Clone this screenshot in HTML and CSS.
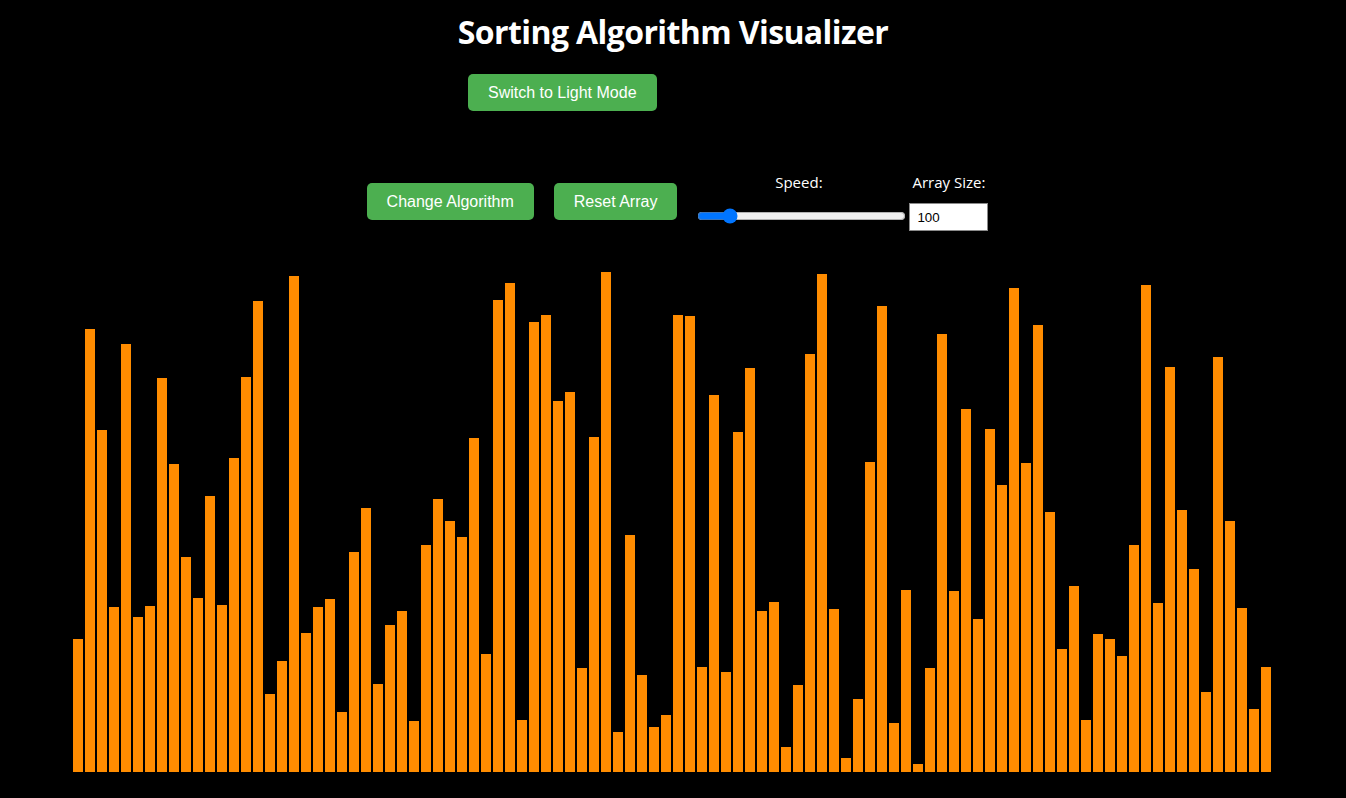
FILE: index.html
```html
<!DOCTYPE html>
<html lang="en">
<head>
<meta charset="utf-8">
<title>Sorting Algorithm Visualizer</title>
<link rel="stylesheet" href="styles.css">
</head>
<body>
<h1 class="title">Sorting Algorithm Visualizer</h1>
<div class="mode-row">
  <button class="btn">Switch to Light Mode</button>
</div>
<div class="controls">
  <button class="btn">Change Algorithm</button>
  <button class="btn">Reset Array</button>
  <div class="inputs">
    <div class="group group-speed">
      <label class="label" for="speed">Speed:</label>
      <div class="slider-wrap"><input id="speed" class="slider" type="range" min="0" max="100" value="13"></div>
    </div>
    <div class="group group-size">
      <label class="label" for="size">Array Size:</label>
      <input id="size" class="size-input" type="number" value="100">
    </div>
  </div>
</div>
<div class="bars">
<div class="bar" style="height:133px"></div>
<div class="bar" style="height:443px"></div>
<div class="bar" style="height:342px"></div>
<div class="bar" style="height:165px"></div>
<div class="bar" style="height:428px"></div>
<div class="bar" style="height:155px"></div>
<div class="bar" style="height:166px"></div>
<div class="bar" style="height:394px"></div>
<div class="bar" style="height:308px"></div>
<div class="bar" style="height:215px"></div>
<div class="bar" style="height:174px"></div>
<div class="bar" style="height:276px"></div>
<div class="bar" style="height:167px"></div>
<div class="bar" style="height:314px"></div>
<div class="bar" style="height:395px"></div>
<div class="bar" style="height:471px"></div>
<div class="bar" style="height:78px"></div>
<div class="bar" style="height:111px"></div>
<div class="bar" style="height:496px"></div>
<div class="bar" style="height:139px"></div>
<div class="bar" style="height:165px"></div>
<div class="bar" style="height:173px"></div>
<div class="bar" style="height:60px"></div>
<div class="bar" style="height:220px"></div>
<div class="bar" style="height:264px"></div>
<div class="bar" style="height:88px"></div>
<div class="bar" style="height:147px"></div>
<div class="bar" style="height:161px"></div>
<div class="bar" style="height:51px"></div>
<div class="bar" style="height:227px"></div>
<div class="bar" style="height:273px"></div>
<div class="bar" style="height:251px"></div>
<div class="bar" style="height:235px"></div>
<div class="bar" style="height:334px"></div>
<div class="bar" style="height:118px"></div>
<div class="bar" style="height:472px"></div>
<div class="bar" style="height:489px"></div>
<div class="bar" style="height:52px"></div>
<div class="bar" style="height:450px"></div>
<div class="bar" style="height:457px"></div>
<div class="bar" style="height:371px"></div>
<div class="bar" style="height:380px"></div>
<div class="bar" style="height:104px"></div>
<div class="bar" style="height:335px"></div>
<div class="bar" style="height:500px"></div>
<div class="bar" style="height:40px"></div>
<div class="bar" style="height:237px"></div>
<div class="bar" style="height:97px"></div>
<div class="bar" style="height:45px"></div>
<div class="bar" style="height:57px"></div>
<div class="bar" style="height:457px"></div>
<div class="bar" style="height:456px"></div>
<div class="bar" style="height:105px"></div>
<div class="bar" style="height:377px"></div>
<div class="bar" style="height:100px"></div>
<div class="bar" style="height:340px"></div>
<div class="bar" style="height:404px"></div>
<div class="bar" style="height:161px"></div>
<div class="bar" style="height:170px"></div>
<div class="bar" style="height:25px"></div>
<div class="bar" style="height:87px"></div>
<div class="bar" style="height:418px"></div>
<div class="bar" style="height:498px"></div>
<div class="bar" style="height:163px"></div>
<div class="bar" style="height:14px"></div>
<div class="bar" style="height:73px"></div>
<div class="bar" style="height:310px"></div>
<div class="bar" style="height:466px"></div>
<div class="bar" style="height:49px"></div>
<div class="bar" style="height:182px"></div>
<div class="bar" style="height:8px"></div>
<div class="bar" style="height:104px"></div>
<div class="bar" style="height:438px"></div>
<div class="bar" style="height:181px"></div>
<div class="bar" style="height:363px"></div>
<div class="bar" style="height:153px"></div>
<div class="bar" style="height:343px"></div>
<div class="bar" style="height:287px"></div>
<div class="bar" style="height:484px"></div>
<div class="bar" style="height:309px"></div>
<div class="bar" style="height:447px"></div>
<div class="bar" style="height:260px"></div>
<div class="bar" style="height:123px"></div>
<div class="bar" style="height:186px"></div>
<div class="bar" style="height:52px"></div>
<div class="bar" style="height:138px"></div>
<div class="bar" style="height:133px"></div>
<div class="bar" style="height:116px"></div>
<div class="bar" style="height:227px"></div>
<div class="bar" style="height:487px"></div>
<div class="bar" style="height:169px"></div>
<div class="bar" style="height:405px"></div>
<div class="bar" style="height:262px"></div>
<div class="bar" style="height:203px"></div>
<div class="bar" style="height:80px"></div>
<div class="bar" style="height:415px"></div>
<div class="bar" style="height:251px"></div>
<div class="bar" style="height:164px"></div>
<div class="bar" style="height:63px"></div>
<div class="bar" style="height:105px"></div>
</div>
</body>
</html>
```
FILE: styles.css
```css
html, body {
  margin: 0;
  padding: 0;
  background: #000;
  color: #fff;
  font-family: "Open Sans", "Noto Sans", sans-serif;
}

.title {
  margin: 11px 0 0;
  font-size: 32px;
  font-weight: 700;
  line-height: 42px;
  text-align: center;
  letter-spacing: -0.6px;
}

.mode-row {
  margin-top: 21px;
  padding-left: 468px;
}

.btn {
  background: #4caf50;
  color: #fff;
  border: none;
  border-radius: 5px;
  padding: 10px 20px;
  font-family: "Liberation Sans", Arial, sans-serif;
  font-size: 16px;
  line-height: 17px;
  cursor: pointer;
}

.controls {
  margin-top: 61px;
  padding-left: 9px;
  display: flex;
  justify-content: center;
  align-items: center;
  gap: 20px;
}

.inputs {
  display: flex;
  align-items: center;
  gap: 3px;
}

.group {
  display: flex;
  flex-direction: column;
  align-items: center;
}

.group-speed {
  padding-right: 0;
}

.label {
  font-size: 15px;
  line-height: 21px;
  margin-bottom: 10px;
}

.group-speed .label {
  margin-right: 6px;
}

.slider-wrap {
  height: 28px;
  display: flex;
  align-items: center;
  padding-bottom: 3px;
  box-sizing: border-box;
}

.slider {
  width: 209px;
  margin: 0;
}

.size-input {
  width: 79px;
  height: 28px;
  box-sizing: border-box;
  margin: 0;
  padding: 0 7px;
  border: 1px solid #8a8a8a;
  background: #fff;
  color: #000;
  font-family: "Liberation Sans", Arial, sans-serif;
  font-size: 13.33px;
}

.bars {
  margin-top: 41px;
  height: 500px;
  display: flex;
  justify-content: center;
  align-items: flex-end;
}

.bar {
  width: 10px;
  margin-right: 2px;
  background: #ff8c00;
  flex: none;
}
```
